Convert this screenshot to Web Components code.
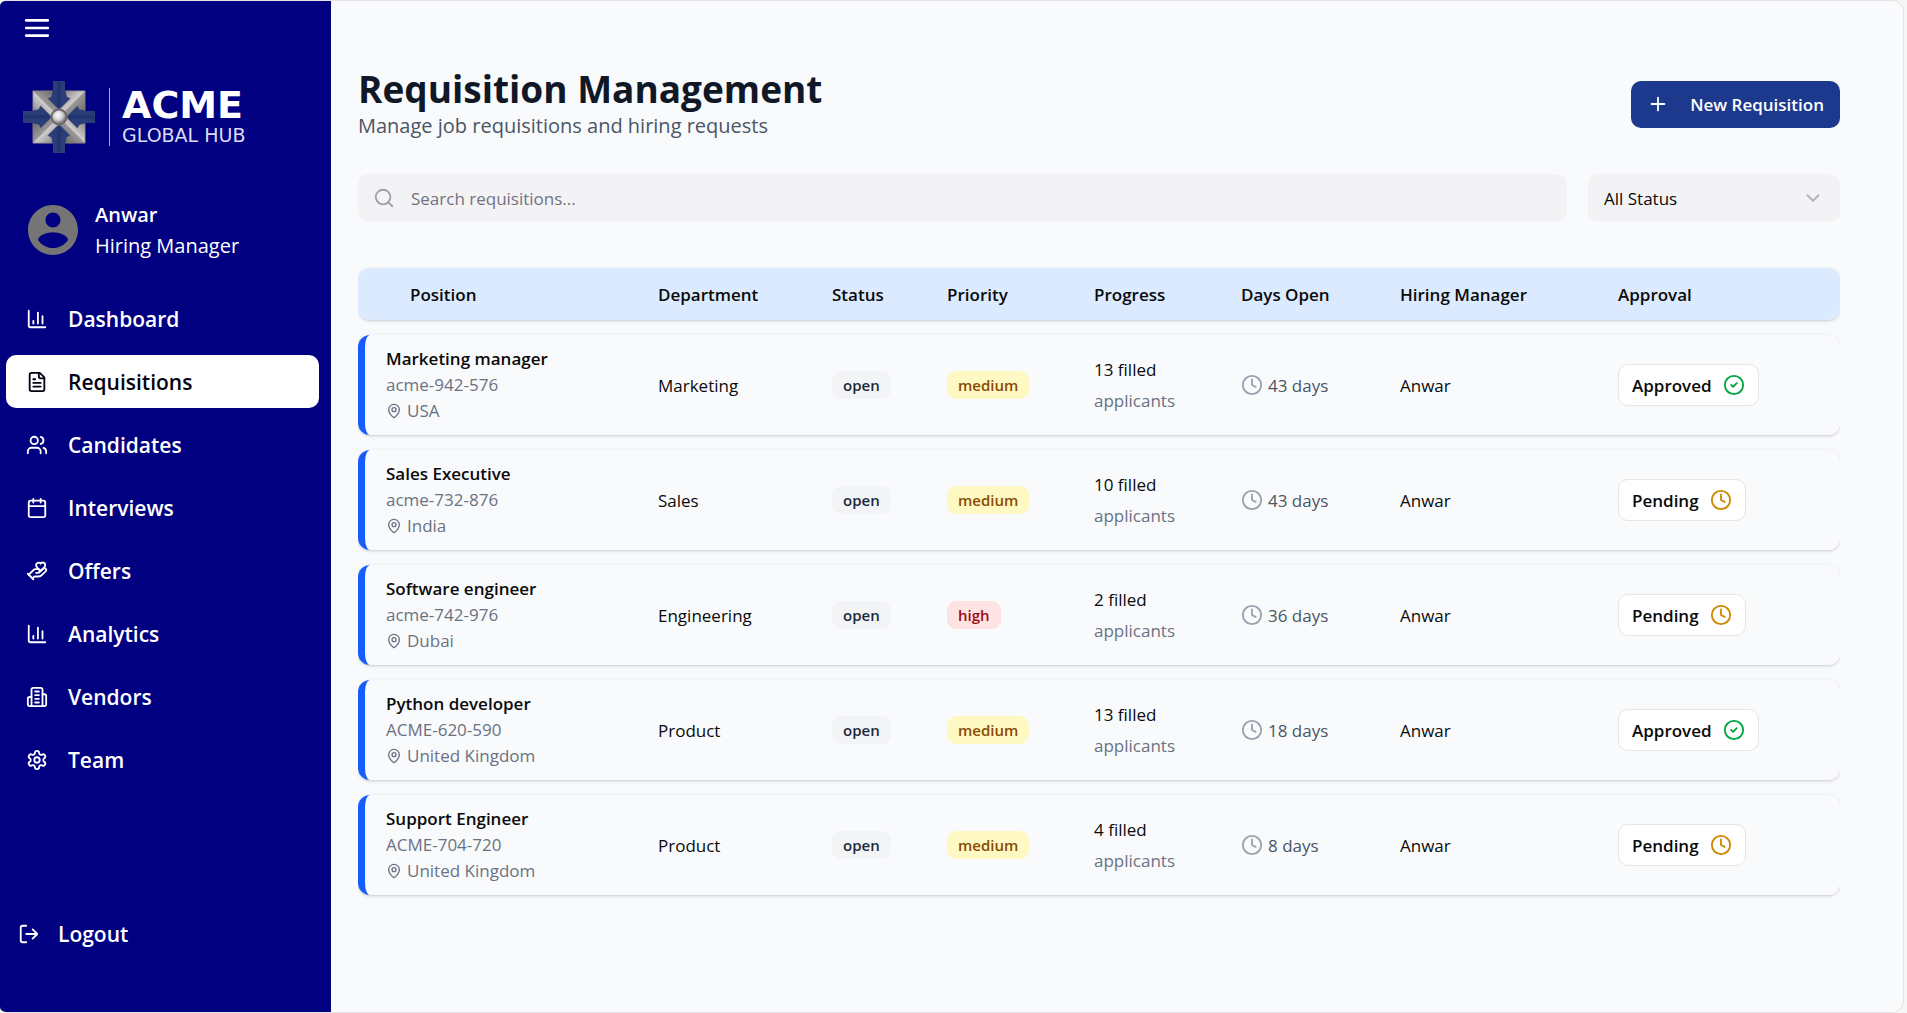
<!DOCTYPE html>
<html lang="en">
<head>
<meta charset="utf-8">
<title>Requisition Management</title>
<style>
  body { margin: 0; background: #f6f6f7; font-family: "Open Sans", "Noto Sans", sans-serif; font-size: 17px; color: #0a0a0a; }
</style>
</head>
<body>
<app-shell>
  <side-bar slot="side">
    <nav-item icon="chart">Dashboard</nav-item>
    <nav-item icon="file" active>Requisitions</nav-item>
    <nav-item icon="users">Candidates</nav-item>
    <nav-item icon="calendar">Interviews</nav-item>
    <nav-item icon="offer">Offers</nav-item>
    <nav-item icon="chart">Analytics</nav-item>
    <nav-item icon="building">Vendors</nav-item>
    <nav-item icon="gear">Team</nav-item>
    <nav-item slot="foot" icon="logout" compact>Logout</nav-item>
  </side-bar>
  <page-header heading="Requisition Management" subtitle="Manage job requisitions and hiring requests"></page-header>
  <filter-bar></filter-bar>
  <requisition-table></requisition-table>
</app-shell>

<script>
const ICONS = {
  chart: '<path d="M3 3v16a2 2 0 0 0 2 2h16M18 17V9M13 17V5M8 17v-3"/>',
  file: '<path d="M15 2H6a2 2 0 0 0-2 2v16a2 2 0 0 0 2 2h12a2 2 0 0 0 2-2V7Z"/><path d="M14 2v4a2 2 0 0 0 2 2h4M10 9H8M16 13H8M16 17H8"/>',
  users: '<path d="M16 21v-2a4 4 0 0 0-4-4H6a4 4 0 0 0-4 4v2"/><circle cx="9" cy="7" r="4"/><path d="M22 21v-2a4 4 0 0 0-3-3.87M16 3.13a4 4 0 0 1 0 7.75"/>',
  calendar: '<path d="M8 2v4M16 2v4"/><rect x="3" y="4" width="18" height="18" rx="2"/><path d="M3 10h18"/>',
  offer: '<path d="M11 14h2a2 2 0 1 0 0-4h-3c-.6 0-1.1.2-1.4.6L3 16"/><path d="m7 20 1.6-1.4c.3-.4.8-.6 1.4-.6h4c1.1 0 2.1-.4 2.8-1.2l4.6-4.4a2 2 0 0 0-2.75-2.91l-4.2 3.9"/><path d="m2 15 6 6"/><path d="M19.5 8.5c.7-.7 1.5-1.6 1.5-2.7A2.73 2.73 0 0 0 16 4a2.78 2.78 0 0 0-5 1.8c0 1.2.8 2 1.5 2.8L16 12Z"/>',
  building: '<path d="M6 22V4a2 2 0 0 1 2-2h8a2 2 0 0 1 2 2v18Z"/><path d="M6 12H4a2 2 0 0 0-2 2v6a2 2 0 0 0 2 2h2M18 9h2a2 2 0 0 1 2 2v9a2 2 0 0 1-2 2h-2M10 6h4M10 10h4M10 14h4M10 18h4"/>',
  gear: '<path d="M12.22 2h-.44a2 2 0 0 0-2 2v.18a2 2 0 0 1-1 1.73l-.43.25a2 2 0 0 1-2 0l-.15-.08a2 2 0 0 0-2.73.73l-.22.38a2 2 0 0 0 .73 2.73l.15.1a2 2 0 0 1 1 1.72v.51a2 2 0 0 1-1 1.74l-.15.09a2 2 0 0 0-.73 2.73l.22.38a2 2 0 0 0 2.73.73l.15-.08a2 2 0 0 1 2 0l.43.25a2 2 0 0 1 1 1.73V20a2 2 0 0 0 2 2h.44a2 2 0 0 0 2-2v-.18a2 2 0 0 1 1-1.73l.43-.25a2 2 0 0 1 2 0l.15.08a2 2 0 0 0 2.73-.73l.22-.39a2 2 0 0 0-.73-2.73l-.15-.08a2 2 0 0 1-1-1.74v-.5a2 2 0 0 1 1-1.74l.15-.09a2 2 0 0 0 .73-2.73l-.22-.38a2 2 0 0 0-2.73-.73l-.15.08a2 2 0 0 1-2 0l-.43-.25a2 2 0 0 1-1-1.73V4a2 2 0 0 0-2-2z"/><circle cx="12" cy="12" r="3"/>',
  logout: '<path d="M9 21H5a2 2 0 0 1-2-2V5a2 2 0 0 1 2-2h4M16 17l5-5-5-5M21 12H9"/>',
  search: '<circle cx="11" cy="11" r="8"/><path d="m21 21-4.3-4.3"/>',
  plus: '<path d="M5 12h14M12 5v14"/>',
  down: '<path d="m6 9 6 6 6-6"/>',
  clock: '<circle cx="12" cy="12" r="10"/><path d="M12 6v6l4 2"/>',
  check: '<circle cx="12" cy="12" r="10"/><path d="m9 12 2 2 4-4"/>',
  pin: '<path d="M20 10c0 4.993-5.539 10.193-7.399 11.799a1 1 0 0 1-1.202 0C9.539 20.193 4 14.993 4 10a8 8 0 0 1 16 0"/><circle cx="12" cy="10" r="3"/>',
  menu: '<path stroke-width="2.4" d="M2 5h20M2 12h20M2 19h20"/>'
};

const define = (name, render) => customElements.define(name, class extends HTMLElement {
  connectedCallback() {
    if (this.shadowRoot) return;
    this.attachShadow({ mode: 'open' }).innerHTML = render(this);
  }
});

define('ui-icon', el => `
  <style>
    :host { display: block; flex: none; width: 22px; height: 22px; }
    svg { display: block; width: 100%; height: 100%; fill: none; stroke: currentColor; stroke-width: 2; stroke-linecap: round; stroke-linejoin: round; }
  </style>
  <svg viewBox="0 0 24 24" aria-hidden="true">${ICONS[el.getAttribute('name')]}</svg>`);

define('app-shell', () => `
  <style>
    :host { display: flex; box-sizing: border-box; min-height: 100vh; margin-right: 3px; border: 1px solid #e4e4e7; border-left: 0; border-radius: 6px 12px 12px 6px; overflow: hidden; background: #f9fafc; }
    main { flex: 1; min-width: 0; padding: 66px 63px 40px 27px; }
  </style>
  <slot name="side"></slot>
  <main><slot></slot></main>`);

define('brand-logo', () => `
  <style>
    :host { display: flex; align-items: center; }
    svg { display: block; width: 72px; height: 72px; }
    .rule { width: 1px; height: 58px; margin: 0 12px 0 14px; background: #a9a9d6; }
    .name { display: grid; color: #fff; font-family: "DejaVu Sans", sans-serif; }
    b { font-size: 38px; line-height: 37px; font-weight: 700; }
    span { font-size: 19px; line-height: 23px; color: #dcdcf2; }
  </style>
  <svg viewBox="-36 -36 72 72" aria-hidden="true">
    <defs>
      <linearGradient id="s" x1="0" y1="0" x2="1" y2="0"><stop offset="0" stop-color="#8d8a8c"/><stop offset=".48" stop-color="#cfcccc"/><stop offset=".52" stop-color="#9b9798"/><stop offset="1" stop-color="#6f6c70"/></linearGradient>
      <radialGradient id="b" cx=".42" cy=".36" r=".65"><stop offset="0" stop-color="#fff"/><stop offset=".55" stop-color="#d2d2d2"/><stop offset="1" stop-color="#77757a"/></radialGradient>
      <g id="in"><path d="M-6-36H6V-23L12-27V-18L0-6-12-18V-27L-6-23Z" fill="#2a3f78"/><path d="M-1-35V-10M1-35V-10" stroke="#1b2c6a" stroke-width="1"/></g>
      <path id="out" d="M-5-3V-21L-9-20-14-23 0-37 14-23 9-20 5-21V-3Z" fill="url(#s)" stroke="#77747a" stroke-width=".6"/>
    </defs>
    <use href="#in"/><use href="#in" transform="rotate(90)"/><use href="#in" transform="rotate(180)"/><use href="#in" transform="rotate(270)"/>
    <use href="#out" transform="rotate(45)"/><use href="#out" transform="rotate(135)"/><use href="#out" transform="rotate(225)"/><use href="#out" transform="rotate(315)"/>
    <circle r="8.5" fill="#6d6a6d"/><circle r="6.5" fill="url(#b)"/>
  </svg>
  <i class="rule"></i>
  <div class="name"><b>ACME</b><span>GLOBAL HUB</span></div>`);

define('side-bar', () => `
  <style>
    :host { display: flex; flex-direction: column; flex: none; box-sizing: border-box; width: 331px; background: #000080; color: #fff; }
    .menu { align-self: flex-start; display: block; margin: 14px 0 0 24px; padding: 0; border: 0; background: none; color: #fff; }
    .menu ui-icon { width: 26px; height: 26px; }
    brand-logo { margin: 40px 0 0 23px; }
    .user { display: flex; align-items: center; gap: 12px; margin: 46px 0 0 23px; font-size: 20px; line-height: 31px; }
    .user svg { width: 60px; height: 60px; fill: #757575; }
    .user b { display: block; font-weight: 600; }
    nav { display: grid; gap: 10px; margin: 31px 12px 0 6px; }
    .foot { margin: auto 12px 52px 6px; }
  </style>
  <button class="menu" aria-label="Toggle menu"><ui-icon name="menu"></ui-icon></button>
  <brand-logo></brand-logo>
  <div class="user">
    <svg viewBox="0 0 24 24" aria-hidden="true"><path d="M12 2C6.48 2 2 6.48 2 12s4.48 10 10 10 10-4.48 10-10S17.52 2 12 2zm0 3c1.66 0 3 1.34 3 3s-1.34 3-3 3-3-1.34-3-3 1.34-3 3-3zm0 14.2c-2.5 0-4.71-1.28-6-3.22.03-1.99 4-3.08 6-3.08 1.99 0 5.97 1.09 6 3.08-1.29 1.94-3.5 3.22-6 3.22z"/></svg>
    <div><b>Anwar</b>Hiring Manager</div>
  </div>
  <nav><slot></slot></nav>
  <div class="foot"><slot name="foot"></slot></div>`);

define('nav-item', el => `
  <style>
    :host { display: block; }
    a { display: flex; align-items: center; gap: 20px; height: 53px; padding: 0 20px; border-radius: 10px; color: #fff; text-decoration: none; font-size: 21px; font-weight: 600; }
    :host([active]) a { background: #fff; color: #030213; }
    :host([compact]) a { padding: 0 12px; gap: 18px; }
  </style>
  <a href="#"><ui-icon name="${el.getAttribute('icon')}"></ui-icon><slot></slot></a>`);

define('page-header', el => `
  <style>
    :host { display: flex; align-items: center; justify-content: space-between; }
    h1 { margin: 0; font-size: 37px; line-height: 44px; font-weight: 700; color: #101828; }
    p { margin: 0; font-size: 20px; line-height: 30px; color: #4a5565; }
    button { display: flex; align-items: center; gap: 21px; height: 47px; padding: 0 16px; border: 0; border-radius: 10px; background: #1c398e; color: #fff; font: inherit; font-weight: 600; }
  </style>
  <div><h1>${el.getAttribute('heading')}</h1><p>${el.getAttribute('subtitle')}</p></div>
  <button><ui-icon name="plus"></ui-icon>New Requisition</button>`);

define('filter-bar', () => `
  <style>
    :host { display: flex; gap: 21px; margin-top: 33px; }
    label { display: flex; align-items: center; flex: 1; gap: 16px; height: 48px; padding: 0 15px; border-radius: 10px; background: #f3f3f5; color: #99a1af; }
    input { flex: 1; min-width: 0; padding: 0; border: 0; outline: 0; background: none; font: inherit; color: #0a0a0a; }
    input::placeholder { color: #717182; opacity: 1; }
    .pick { display: grid; flex: none; width: 252px; align-items: center; }
    select, .pick ui-icon { grid-area: 1 / 1; }
    select { height: 48px; padding: 0 16px; appearance: none; border: 0; border-radius: 10px; background: #f3f3f5; font: inherit; color: #0a0a0a; }
    .pick ui-icon { justify-self: end; margin-right: 16px; color: #b1b1b8; pointer-events: none; }
  </style>
  <label><ui-icon name="search"></ui-icon><input type="text" placeholder="Search requisitions..." aria-label="Search requisitions"></label>
  <div class="pick"><select aria-label="Status"><option>All Status</option></select><ui-icon name="down"></ui-icon></div>`);

define('tag-badge', () => `
  <style>
    :host { display: inline-block; padding: 0 11px; border-radius: 9px; font-size: 15px; line-height: 28px; font-weight: 600; vertical-align: middle; background: #f3f4f6; color: #1e2939; }
    :host([tone="medium"]) { background: #fef9c2; color: #894b00; }
    :host([tone="high"]) { background: #ffe2e2; color: #9f0712; }
  </style><slot></slot>`);

define('approval-button', el => {
  const ok = el.getAttribute('state') === 'Approved';
  return `
  <style>
    :host { display: inline-block; vertical-align: middle; }
    button { display: flex; align-items: center; gap: 11px; height: 42px; padding: 0 13px; border: 1px solid #e5e5e5; border-radius: 10px; background: #fff; color: #0a0a0a; font: inherit; font-weight: 600; }
    ui-icon { color: ${ok ? '#00a63e' : '#d08700'}; }
  </style>
  <button>${el.getAttribute('state')}<ui-icon name="${ok ? 'check' : 'clock'}"></ui-icon></button>`;
});

const ROWS = [
  ['Marketing manager', 'acme-942-576', 'USA', 'Marketing', 'medium', 13, 43, 'Approved'],
  ['Sales Executive', 'acme-732-876', 'India', 'Sales', 'medium', 10, 43, 'Pending'],
  ['Software engineer', 'acme-742-976', 'Dubai', 'Engineering', 'high', 2, 36, 'Pending'],
  ['Python developer', 'ACME-620-590', 'United Kingdom', 'Product', 'medium', 13, 18, 'Approved'],
  ['Support Engineer', 'ACME-704-720', 'United Kingdom', 'Product', 'medium', 4, 8, 'Pending']
];

define('requisition-table', () => `
  <style>
    :host { display: block; margin-top: 31px; overflow: hidden; }
    table { width: 100%; table-layout: fixed; border-collapse: separate; border-spacing: 0 15px; }
    tr { border-radius: 12px; box-shadow: 0 1px 4px rgba(0,0,0,.1), 0 1px 2px rgba(0,0,0,.1); }
    th, td { padding: 0 0 0 20px; text-align: left; vertical-align: middle; white-space: nowrap; }
    th { height: 52px; background: #dbeafe; font-weight: 600; }
    th:first-child { padding-left: 52px; border-radius: 12px 0 0 12px; }
    th:last-child { border-radius: 0 12px 12px 0; }
    td { height: 100px; background: #f9fafc; }
    td:first-child { padding-left: 21px; border-left: 7px solid #155dfc; border-radius: 12px 0 0 12px; line-height: 26px; color: #6a7282; }
    td:last-child { border-radius: 0 12px 12px 0; }
    b { display: block; font-weight: 600; color: #0a0a0a; }
    .place, .days { display: flex; align-items: center; gap: 5px; }
    .place ui-icon { width: 16px; height: 16px; }
    .days { color: #4a5565; }
    .days ui-icon { color: #99a1af; }
    .progress { line-height: 31px; }
    .progress span { display: block; color: #6a7282; }
  </style>
  <table>
    <colgroup>${[280, 174, 115, 147, 147, 159, 218, 242].map(w => `<col style="width:${w}px">`).join('')}</colgroup>
    <thead><tr>${['Position', 'Department', 'Status', 'Priority', 'Progress', 'Days Open', 'Hiring Manager', 'Approval'].map(h => `<th scope="col">${h}</th>`).join('')}</tr></thead>
    <tbody>${ROWS.map(([name, id, place, dept, priority, filled, days, state]) => `
      <tr>
        <td><b>${name}</b>${id}<div class="place"><ui-icon name="pin"></ui-icon>${place}</div></td>
        <td>${dept}</td>
        <td><tag-badge>open</tag-badge></td>
        <td><tag-badge tone="${priority}">${priority}</tag-badge></td>
        <td class="progress">${filled} filled<span>applicants</span></td>
        <td><div class="days"><ui-icon name="clock"></ui-icon>${days} days</div></td>
        <td>Anwar</td>
        <td><approval-button state="${state}"></approval-button></td>
      </tr>`).join('')}</tbody>
  </table>`);
</script>
</body>
</html>
